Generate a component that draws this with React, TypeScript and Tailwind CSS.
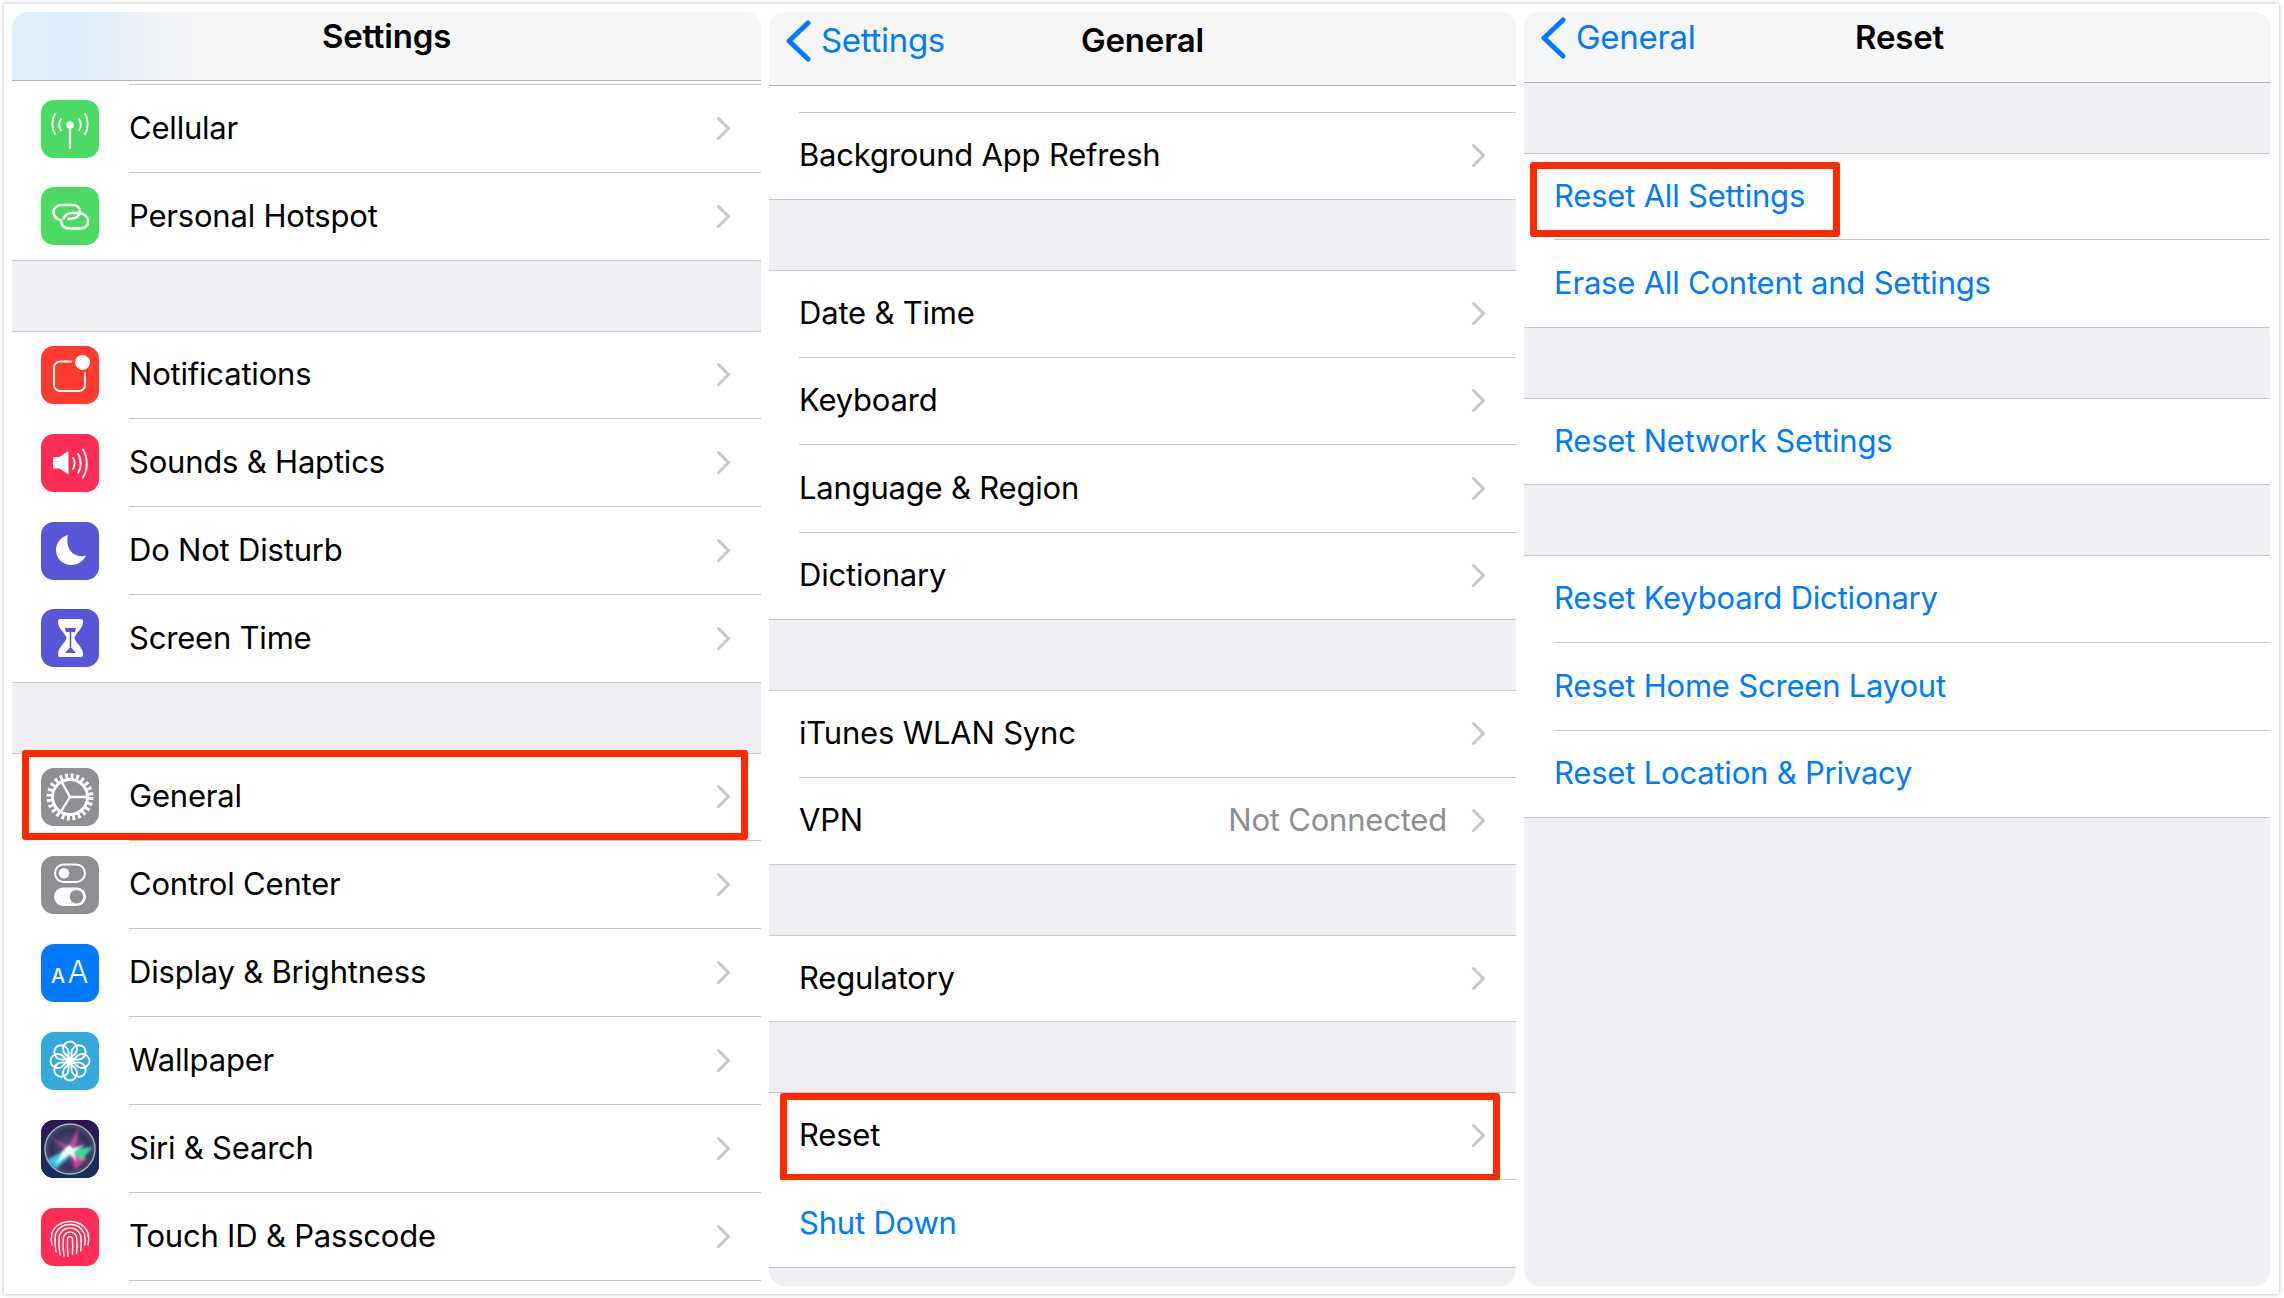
import type { ReactNode } from "react";

const white = { fill: "none", stroke: "#fff", strokeLinecap: "round" as const };

const CellularIcon = () => (
  <svg viewBox="0 0 58 58" className="size-full">
    <g {...white} strokeWidth="1.900">
      <path d="M29 25v23" strokeWidth="2.200" />
      <path d="M14 14c-3.500 5.500-3.500 14.500 0 20M44 14c3.500 5.500 3.500 14.500 0 20" />
      <path d="M20 19c-2.200 3.500-2.200 8 0 11.500M38 19c2.200 3.500 2.200 8 0 11.500" />
    </g>
    <circle cx="29" cy="25" r="3.800" fill="#fff" />
  </svg>
);

const HotspotIcon = () => (
  <svg viewBox="0 0 58 58" className="size-full">
    <g {...white} strokeWidth="2.600">
      <path d="M20 33.500C15 32 12.500 28.500 12.500 25 12.500 20.500 16.500 18 22 18h9c5 0 8 2.500 8 6.500s-3.500 6.500-8 7l-3.500.5" />
      <path d="M20.500 35.500C21 39.500 24.500 41.500 29 41.500h9c5.500 0 9-2.500 9-7s-3.500-8-9-8.500h-7c-4 0-7 2-8.500 5.500" />
    </g>
  </svg>
);

const NotificationsIcon = () => (
  <svg viewBox="0 0 58 58" className="size-full">
    <rect x="13" y="15.500" width="31" height="29.500" rx="6" fill="none" stroke="#fff" strokeWidth="1.900" />
    <circle cx="41.500" cy="16.500" r="10.500" fill="#ff3b30" />
    <circle cx="41.500" cy="16.500" r="7.500" fill="#fff" />
  </svg>
);

const SoundsIcon = () => (
  <svg viewBox="0 0 58 58" className="size-full">
    <path d="M12 23h6.500l8-5.500a.6.6 0 0 1 1 .5v21.500a.6.6 0 0 1-1 .5l-8-5.500H12z" fill="#fff" />
    <g {...white} strokeWidth="1.900">
      <path d="M32 24c2 3 2 7.500 0 11" />
      <path d="M37 20c3.500 5 3.500 14 0 19" />
      <path d="M42 15.500c5 8 5 20 0 28" />
    </g>
  </svg>
);

const MoonIcon = () => (
  <svg viewBox="0 0 58 58" className="size-full">
    <path d="M27 13C19.500 15 15 21 15 28c0 8.500 7 15 15 15 7 0 12.500-4 15-9.500C33.500 37 23.500 27 27 13Z" fill="#fff" />
  </svg>
);

const HourglassIcon = () => (
  <svg viewBox="0 0 58 58" className="size-full">
    <path
      d="M19 10h21a2 2 0 0 1 2 2v1c0 7-7.500 11-8.500 16 1 5 8.500 9 8.500 16v1a2 2 0 0 1-2 2H19a2 2 0 0 1-2-2v-1c0-7 7.500-11 8.500-16-1-5-8.500-9-8.500-16v-1a2 2 0 0 1 2-2Z"
      fill="#fff"
    />
    <path d="M24 19h11l-1 4h-9zM29.700 38l5.300 6H24l5.300-6z" fill="#5856d6" />
    <path d="M29.500 23v15" stroke="#5856d6" strokeWidth="1.600" />
  </svg>
);

const GearIcon = () => (
  <svg viewBox="0 0 58 58" className="size-full">
    <circle cx="29" cy="29" r="21" fill="none" stroke="#fff" strokeWidth="5" strokeDasharray="2.900 2.598" />
    <circle cx="29" cy="29" r="17.500" fill="none" stroke="#fff" strokeWidth="3" />
    <path d="M29 29 21.300 15M29 29h16M29 29l-8.500 13.600" fill="none" stroke="#fff" strokeWidth="2.300" strokeLinecap="round" />
  </svg>
);

const ControlIcon = () => (
  <svg viewBox="0 0 58 58" className="size-full">
    <rect x="14" y="8.500" width="30" height="17.500" rx="8.750" fill="none" stroke="#fff" strokeWidth="2" />
    <circle cx="23" cy="17.300" r="5.300" fill="#fff" />
    <rect x="13" y="31.500" width="32" height="18.500" rx="9.250" fill="#fff" />
    <circle cx="35.500" cy="40.800" r="6.800" fill="#8e8e93" />
  </svg>
);

const DisplayIcon = () => (
  <svg viewBox="0 0 58 58" className="size-full">
    <text x="10" y="39" fill="#fff" fontSize="20" fontFamily="Inter, sans-serif" fontWeight="500">A</text>
    <text x="26.500" y="39.300" fill="#fff" fontSize="31" fontFamily="Inter, sans-serif" fontWeight="300">A</text>
  </svg>
);

const WallpaperIcon = () => (
  <svg viewBox="0 0 58 58" className="size-full">
    <g fill="none" stroke="#fff" strokeWidth="1.900">
      {[0, 45, 90, 135, 180, 225, 270, 315].map((a) => (
        <path key={a} transform={`rotate(${a} 29 29)`} d="M29 26c-5-3-7-6-7-9 0-4 3.200-7.500 7-7.500s7 3.500 7 7.500c0 3-2 6-7 9Z" />
      ))}
    </g>
    <circle cx="29" cy="29" r="3.200" fill="#fff" />
  </svg>
);

const SiriIcon = () => (
  <svg viewBox="0 0 58 58" className="size-full">
    <defs>
      <linearGradient id="siriBg" x1="0" y1="0" x2="0" y2="1">
        <stop offset="0" stopColor="#2f1450" />
        <stop offset="1" stopColor="#14305a" />
      </linearGradient>
      <radialGradient id="siriDisc">
        <stop offset="0" stopColor="#5a5a88" />
        <stop offset="0.75" stopColor="#34305c" />
        <stop offset="1" stopColor="#46506e" />
      </radialGradient>
      <filter id="siriBlur" x="-30%" y="-30%" width="160%" height="160%">
        <feGaussianBlur stdDeviation="1.800" />
      </filter>
      <filter id="siriCore" x="-30%" y="-30%" width="160%" height="160%">
        <feGaussianBlur stdDeviation="0.800" />
      </filter>
    </defs>
    <rect width="58" height="58" fill="url(#siriBg)" />
    <circle cx="29" cy="29" r="25" fill="url(#siriDisc)" stroke="#a9b3bd" strokeWidth="1.400" />
    <g filter="url(#siriBlur)">
      <path d="M9 17 28 27 38 7 34 30 30 33Z" fill="#e0459c" />
      <path d="M30 29 46 39 34 50 30 36Z" fill="#c93f95" />
      <path d="M27 29 52 27 41 40Z" fill="#3fd6a0" />
      <path d="M30 27 6 40 15 49 31 34Z" fill="#3ccde4" />
    </g>
    <path d="M22 31 28 25 32 29 44 24 33 32 36 42 29 34 15 44Z" fill="#f2feff" filter="url(#siriCore)" />
  </svg>
);

const TouchIcon = () => (
  <svg viewBox="0 0 58 58" className="size-full">
    <g {...white} strokeWidth="1.500">
      <path d="M11 37c-1-4-1-8 0-12 2.500-7 9.500-11.500 18-11.500S44.500 18 47 25c1 4 1 8 0 12" />
      <path d="M15 44c-1-6-1.500-12-.500-18C17 20 22.500 16.500 29 16.500S41 20 43.500 26c.8 4 .8 8 .3 11" />
      <path d="M19 47c-1-6-1.500-12-.800-19C20 23 24 20 29 20s9 3 10.800 8c.7 5 .6 10 0 15" />
      <path d="M23 48c-.8-6-1.200-12-.7-18.500C23.500 26 26 24 29 24s5.500 2 6.700 5.500c.5 6 .4 11-.2 16" />
      <path d="M27 48.500c-.6-6-.8-12-.5-17.500.3-1.500 1.300-2.500 2.500-2.500s2.200 1 2.500 2.500c.3 5 .3 10 0 15" />
    </g>
  </svg>
);

const Chevron = () => (
  <svg viewBox="0 0 15 25" className="h-[25px] w-[15px] shrink-0" fill="none" stroke="#c7c7cc" strokeWidth="3" strokeLinecap="round" strokeLinejoin="round">
    <path d="M2.500 2.500 12.500 12.500 2.500 22.500" />
  </svg>
);

const BackChevron = () => (
  <svg viewBox="0 0 25 42" className="h-[42px] w-[25px] shrink-0" fill="none" stroke="#007aff" strokeWidth="5" strokeLinecap="round" strokeLinejoin="round">
    <path d="M22 3 3 21 22 39" />
  </svg>
);

const Gap = ({ h }: { h: string }) => <div className={`${h} bg-[#efeff4] border-b border-[#c8c7cc]`} />;

type RowProps = {
  label: string;
  h: string;
  iconBg?: string;
  icon?: ReactNode;
  value?: string;
  blue?: boolean;
  noChevron?: boolean;
  full?: boolean;
  mark?: string;
};

function Row({ label, h, iconBg, icon, value, blue, noChevron, full, mark }: RowProps) {
  return (
    <div className={`${h} relative flex items-stretch bg-white ${icon ? "pl-[29px]" : "pl-[30px]"} ${full ? "border-b border-[#c8c7cc]" : ""}`}>
      {icon && (
        <div className="mr-[30px] flex shrink-0 items-center pb-px">
          <div className={`${iconBg} size-[58px] overflow-hidden rounded-[13px]`}>{icon}</div>
        </div>
      )}
      <div className={`flex min-w-0 flex-1 items-center pr-[30px] pb-px ${full ? "" : "border-b border-[#c8c7cc]"}`}>
        <span className={`text-[31px] tracking-[-0.2px] ${blue ? "text-[#007aff]" : "text-black"}`}>{label}</span>
        {value && <span className="ml-auto text-[31px] tracking-[-0.2px] text-[#8e8e93]">{value}</span>}
        {!noChevron && <div className={`${value ? "ml-[24px]" : "ml-auto"}`}><Chevron /></div>}
      </div>
      {mark && <div className={`absolute rounded-[3px] border-[7px] border-[#ff2a00] ${mark}`} />}
    </div>
  );
}

function Header({ title, back, backTop, className }: { title: string; back?: string; backTop?: string; className: string }) {
  return (
    <div className={`relative flex items-center justify-center border-b border-[#b2b2b2] ${className}`}>
      {back && (
        <div className={`absolute left-[17px] ${backTop} flex items-center gap-[10px] text-[33px] tracking-[-0.3px] text-[#007aff]`}>
          <BackChevron />
          {back}
        </div>
      )}
      <span className="text-[33px] font-semibold tracking-[-0.2px] text-black">{title}</span>
    </div>
  );
}

export default function App() {
  return (
    <div className="h-[1298px] w-[2284px] overflow-hidden bg-white font-['Inter',sans-serif]">
      <div className="m-[4px] h-[1290px] w-[2275px] bg-white pl-[8px] pt-[8px] shadow-[0_0_4px_rgba(0,0,0,0.3)]">
        <div className="grid h-full grid-cols-[749px_747px_746px] gap-[8px]">
          {/* settings */}
          <div className="flex flex-col overflow-hidden rounded-t-[16px]">
            <Header title="Settings" className="h-[69px] bg-[linear-gradient(90deg,#e2effb_0px,#ddedfc_70px,#eef2f7_130px,#f6f6f7_200px)] pb-[18px]" />
            <div className="h-[4px] bg-white pl-[117px]"><div className="h-full border-b border-[#c8c7cc]" /></div>
            <Row h="h-[88px]" label="Cellular" iconBg="bg-[#4cd964]" icon={<CellularIcon />} />
            <Row h="h-[88px]" full label="Personal Hotspot" iconBg="bg-[#4cd964]" icon={<HotspotIcon />} />
            <Gap h="h-[71px]" />
            <Row h="h-[87px]" label="Notifications" iconBg="bg-[#ff3b30]" icon={<NotificationsIcon />} />
            <Row h="h-[88px]" label="Sounds &amp; Haptics" iconBg="bg-[#ff2d55]" icon={<SoundsIcon />} />
            <Row h="h-[88px]" label="Do Not Disturb" iconBg="bg-[#5856d6]" icon={<MoonIcon />} />
            <Row h="h-[88px]" full label="Screen Time" iconBg="bg-[#5856d6]" icon={<HourglassIcon />} />
            <Gap h="h-[71px]" />
            <Row h="h-[87px]" label="General" iconBg="bg-[#8e8e93]" icon={<GearIcon />} mark="left-[10px] top-[-4px] h-[90px] w-[726px]" />
            <Row h="h-[88px]" label="Control Center" iconBg="bg-[#8e8e93]" icon={<ControlIcon />} />
            <Row h="h-[88px]" label="Display &amp; Brightness" iconBg="bg-[#007aff]" icon={<DisplayIcon />} />
            <Row h="h-[88px]" label="Wallpaper" iconBg="bg-[#34aadc]" icon={<WallpaperIcon />} />
            <Row h="h-[88px]" label="Siri &amp; Search" iconBg="bg-[#1d2150]" icon={<SiriIcon />} />
            <Row h="h-[88px]" label="Touch ID &amp; Passcode" iconBg="bg-[#ff2d55]" icon={<TouchIcon />} />
            <div className="flex-1 bg-white" />
          </div>

          {/* general */}
          <div className="mb-[8px] flex flex-col overflow-hidden rounded-[16px] bg-[#efeff4]">
            <Header title="General" back="Settings" backTop="top-[4px]" className="h-[74px] bg-[#f6f6f7] pb-[15px]" />
            <div className="h-[27px] bg-white pl-[30px]"><div className="h-full border-b border-[#c8c7cc]" /></div>
            <Row h="h-[87px]" full label="Background App Refresh" />
            <Gap h="h-[71px]" />
            <Row h="h-[87px]" label="Date &amp; Time" />
            <Row h="h-[87px]" label="Keyboard" />
            <Row h="h-[88px]" label="Language &amp; Region" />
            <Row h="h-[87px]" full label="Dictionary" />
            <Gap h="h-[71px]" />
            <Row h="h-[87px]" label="iTunes WLAN Sync" />
            <Row h="h-[87px]" full label="VPN" value="Not Connected" />
            <Gap h="h-[71px]" />
            <Row h="h-[86px]" full label="Regulatory" />
            <Gap h="h-[71px]" />
            <Row h="h-[87px]" label="Reset" mark="left-[11px] top-0 h-[88px] w-[720px]" />
            <Row h="h-[88px]" full blue noChevron label="Shut Down" />
          </div>

          {/* reset */}
          <div className="mb-[8px] flex flex-col overflow-hidden rounded-[16px] bg-[#efeff4]">
            <Header title="Reset" back="General" backTop="top-[1px]" className="h-[71px] bg-[#f5f6f8] pb-[18px] pl-[5px]" />
            <Gap h="h-[71px]" />
            <Row h="h-[86px]" blue noChevron label="Reset All Settings" mark="left-[6px] top-[8px] h-[75px] w-[310px]" />
            <Row h="h-[88px]" full blue noChevron label="Erase All Content and Settings" />
            <Gap h="h-[71px]" />
            <Row h="h-[86px]" full blue noChevron label="Reset Network Settings" />
            <Gap h="h-[71px]" />
            <Row h="h-[87px]" blue noChevron label="Reset Keyboard Dictionary" />
            <Row h="h-[88px]" blue noChevron label="Reset Home Screen Layout" />
            <Row h="h-[87px]" full blue noChevron label="Reset Location &amp; Privacy" />
          </div>
        </div>
      </div>
    </div>
  );
}
